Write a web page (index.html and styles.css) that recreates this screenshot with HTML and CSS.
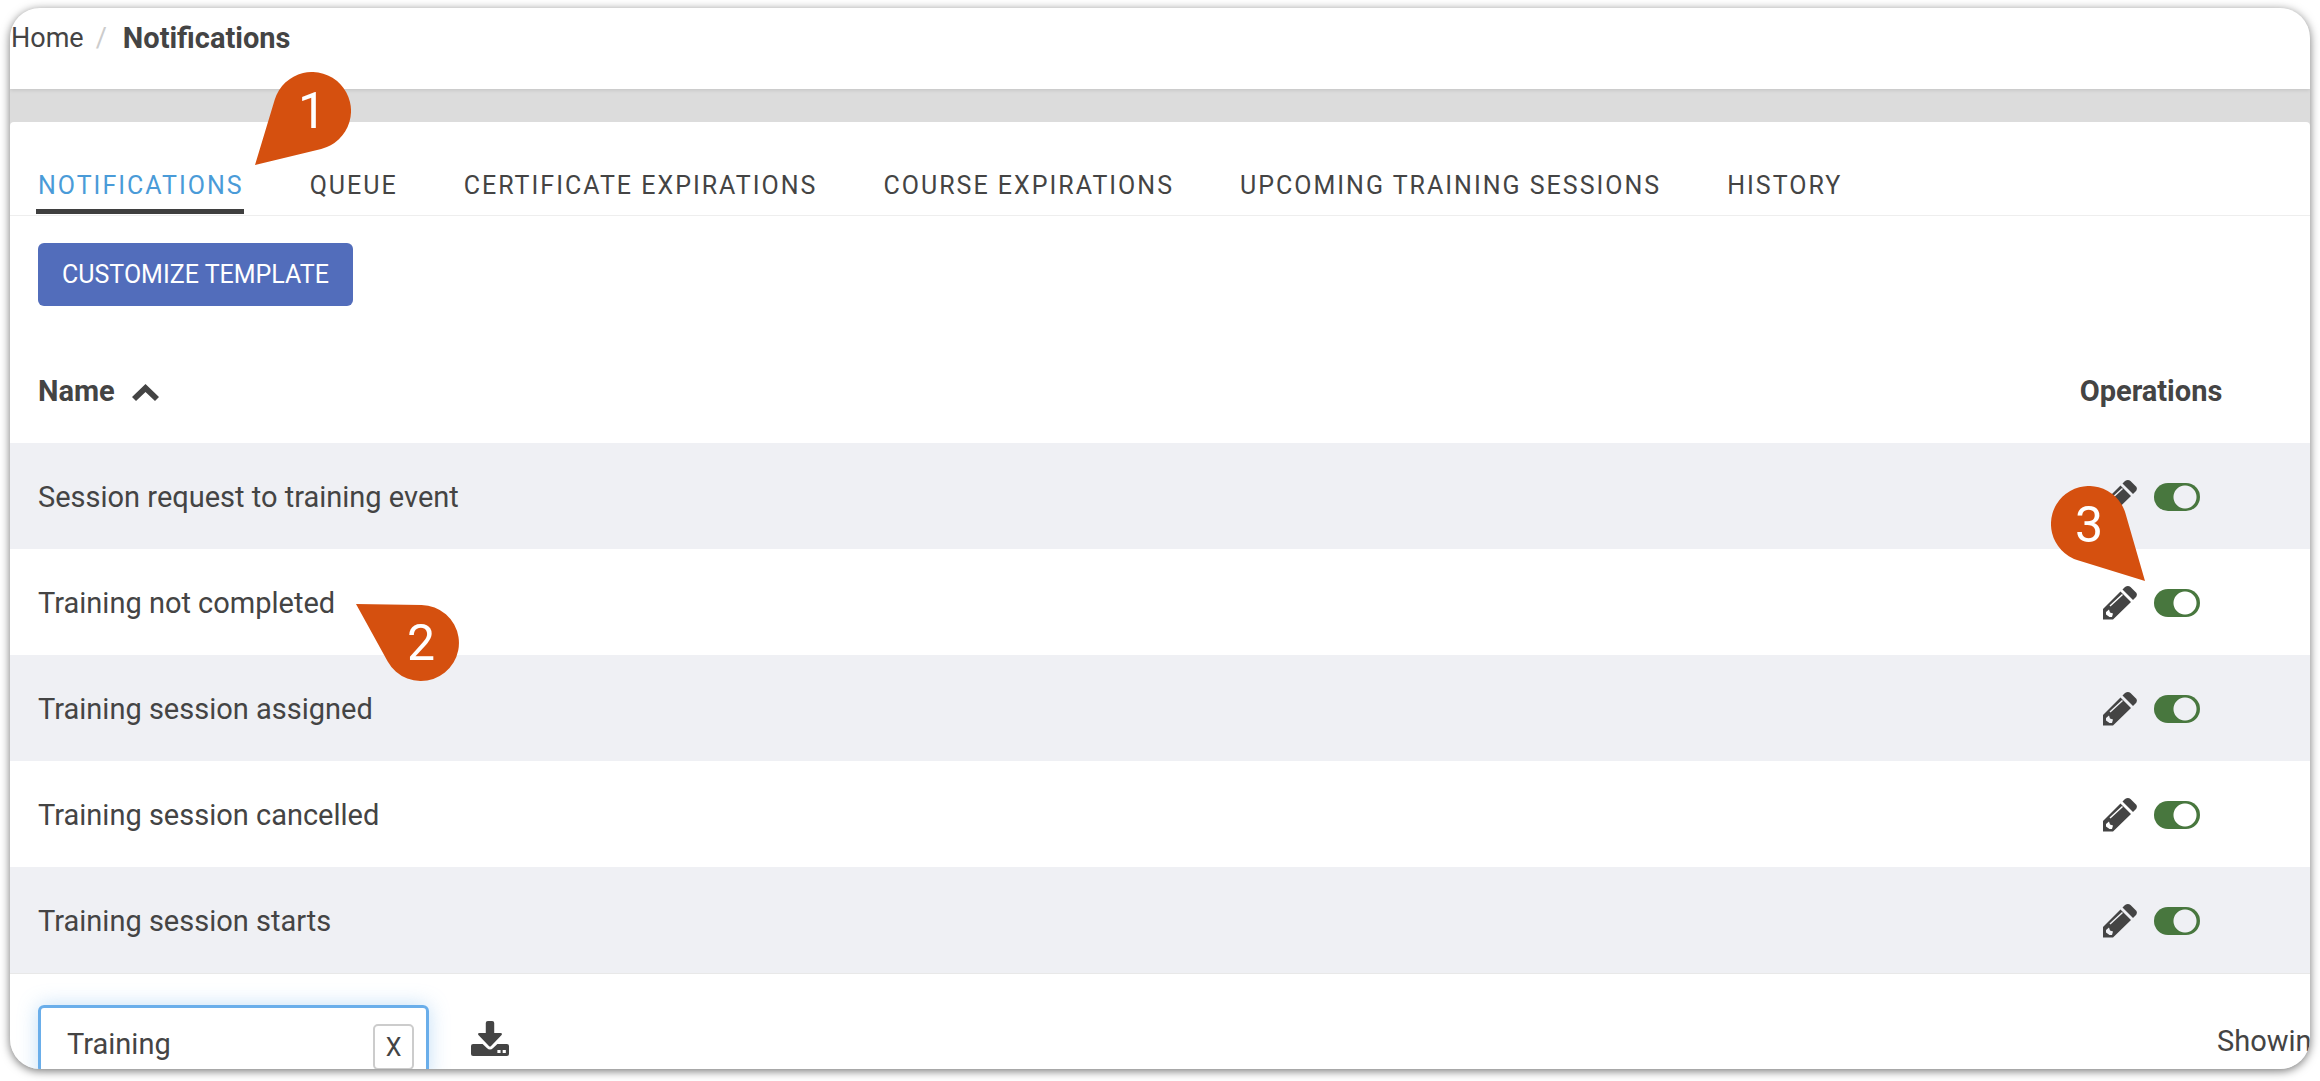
FILE: index.html
```html
<!DOCTYPE html>
<html lang="en">
<head>
  <meta charset="UTF-8" />
  <title>Notifications</title>
  <link rel="stylesheet" href="styles.css">
</head>
<body>
  <svg width="0" height="0" class="sprite" aria-hidden="true">
    <symbol id="pencil" viewBox="0 0 34 34">
      <path fill-rule="evenodd" d="M0 23L17.5 5.5L28 16L10 33.5H0ZM6.5 19.5L7.5 20.5L20 9L19 8ZM3 26L6 23.5L7 26.5L10 27.5L9 31H6.5L3 28.5Z" />
      <path d="M19.5 3.5L22 1Q25 -1 27.500 1L33 6.500Q35 9 32.500 11.500L30 14Z" />
    </symbol>
  </svg>

  <div class="panel">
    <nav class="breadcrumb" aria-label="Breadcrumb">
      <a href="#">Home</a>
      <span class="slash">/</span>
      <strong>Notifications</strong>
    </nav>

    <div class="content">
      <nav class="tabs">
        <div class="tab-wrap">
          <a class="tab active" href="#">NOTIFICATIONS</a>
          <svg class="marker marker-1" width="96" height="94" viewBox="0 0 96 94">
            <path d="M0 93L19.700 27.700A39 39 0 1 1 66.200 76.900Z" />
            <text x="57" y="56">1</text>
          </svg>
        </div>
        <a class="tab" href="#">QUEUE</a>
        <a class="tab" href="#">CERTIFICATE EXPIRATIONS</a>
        <a class="tab" href="#">COURSE EXPIRATIONS</a>
        <a class="tab" href="#">UPCOMING TRAINING SESSIONS</a>
        <a class="tab" href="#">HISTORY</a>
      </nav>

      <div class="actions">
        <button class="btn-primary" type="button">CUSTOMIZE TEMPLATE</button>
      </div>

      <table>
        <thead>
          <tr>
            <th class="name">
              <button class="sort" type="button">Name
                <svg width="27" height="17" viewBox="0 0 27 17"><path d="M13.500 0L27 13L23 17L13.500 8L4 17L0 13Z" /></svg>
              </button>
            </th>
            <th class="ops">Operations</th>
          </tr>
        </thead>
        <tbody>
          <tr>
            <td>Session request to training event</td>
            <td class="ops">
              <div class="ops-inner">
                <button class="icon-btn" type="button" aria-label="Edit"><svg width="34" height="34"><use href="#pencil" /></svg></button>
                <input class="toggle" type="checkbox" aria-label="Session request to training event enabled" checked>
              </div>
            </td>
          </tr>
          <tr>
            <td>
              Training not completed
              <svg class="marker marker-2" width="103" height="78" viewBox="0 0 103 78">
                <path d="M0 0L65.600 1A38 38 0 1 1 31.700 57.400Z" />
                <text x="65" y="56">2</text>
              </svg>
            </td>
            <td class="ops">
              <div class="ops-inner">
                <button class="icon-btn" type="button" aria-label="Edit"><svg width="34" height="34"><use href="#pencil" /></svg></button>
                <input class="toggle" type="checkbox" aria-label="Training not completed enabled" checked>
              </div>
              <svg class="marker marker-3" width="94" height="95" viewBox="0 0 94 95">
                <path d="M94 95L74.500 27.500A38 38 0 1 0 26.800 74.300Z" />
                <text x="38" y="56">3</text>
              </svg>
            </td>
          </tr>
          <tr>
            <td>Training session assigned</td>
            <td class="ops">
              <div class="ops-inner">
                <button class="icon-btn" type="button" aria-label="Edit"><svg width="34" height="34"><use href="#pencil" /></svg></button>
                <input class="toggle" type="checkbox" aria-label="Training session assigned enabled" checked>
              </div>
            </td>
          </tr>
          <tr>
            <td>Training session cancelled</td>
            <td class="ops">
              <div class="ops-inner">
                <button class="icon-btn" type="button" aria-label="Edit"><svg width="34" height="34"><use href="#pencil" /></svg></button>
                <input class="toggle" type="checkbox" aria-label="Training session cancelled enabled" checked>
              </div>
            </td>
          </tr>
          <tr>
            <td>Training session starts</td>
            <td class="ops">
              <div class="ops-inner">
                <button class="icon-btn" type="button" aria-label="Edit"><svg width="34" height="34"><use href="#pencil" /></svg></button>
                <input class="toggle" type="checkbox" aria-label="Training session starts enabled" checked>
              </div>
            </td>
          </tr>
        </tbody>
      </table>

      <div class="table-footer">
        <div class="search">
          <input type="text" value="Training" aria-label="Search notifications">
          <button type="button" aria-label="Clear search">X</button>
        </div>
        <button class="icon-btn download" type="button" aria-label="Download">
          <svg width="38" height="36" viewBox="0 0 36 36" preserveAspectRatio="none">
            <path d="M14 2Q14 0 16 0H20Q22 0 22 2V12H28Q30 12 29 14L19 25Q18 26 17 25L7 14Q6 12 8 12H14Z" />
            <path fill-rule="evenodd" d="M2 23H11L15 27Q18 30 21 27L25 23H34Q36 23 36 25V33Q36 35 34 35H2Q0 35 0 33V25Q0 23 2 23ZM25 29V32H28V29ZM30 29V32H33V29Z" />
          </svg>
        </button>
        <span class="count">Showing</span>
      </div>
    </div>
  </div>
</body>
</html>
```
FILE: styles.css
```css
* {
  box-sizing: border-box;
}
body {
  font-family: Roboto, Arial, sans-serif;
  font-size: 29px;
  color: #444;
  background: white;
  height: 100vh;
  margin: 0;
  padding: 8px 10px 12px;
}
.sprite {
  position: absolute;
}
svg {
  display: block;
  fill: #444;
}
a {
  color: inherit;
  text-decoration: none;
}
button, input {
  font: inherit;
  color: inherit;
  margin: 0;
}
button {
  cursor: pointer;
}
.panel {
  height: 100%;
  overflow: hidden;
  background: #dcdcdc;
  border-radius: 30px;
  box-shadow: 0 2px 10px rgba(0,0,0,0.55);
}
.breadcrumb {
  display: flex;
  gap: 12px;
  height: 81px;
  padding: 12px 1px;
  line-height: 36px;
  background: white;
  box-shadow: 0 1px 4px rgba(0,0,0,0.12);
}
.breadcrumb a {
  font-size: 27px;
}
.breadcrumb .slash {
  color: #ccc;
  font-size: 27px;
}
.breadcrumb strong {
  margin-left: 4px;
}
.content {
  margin-top: 33px;
  background: white;
  border-radius: 4px 4px 0 0;
}

/* tabs */
.tabs {
  display: flex;
  gap: 64px;
  height: 94px;
  padding: 0 26px;
  border-bottom: 1px solid #eee;
}
.tab-wrap {
  position: relative;
}
.tab {
  display: block;
  height: 92px;
  padding: 48px 0 0 2px;
  font-size: 25px;
  line-height: 32px;
  letter-spacing: 2px;
  white-space: nowrap;
}
.tab.active {
  color: #4a9bd8;
  border-bottom: 5px solid #3f3f3f;
}

/* numbered callouts */
.marker {
  position: absolute;
  z-index: 2;
  fill: #d5500f;
}
.marker text {
  fill: white;
  font-size: 50px;
  text-anchor: middle;
}
.marker-1 {
  left: 219px;
  top: -50px;
}
.marker-2 {
  left: 346px;
  top: 55px;
}
.marker-3 {
  right: 165px;
  top: -63px;
}

.actions {
  padding: 27px 28px 36px;
}
.btn-primary {
  display: block;
  height: 63px;
  padding: 0 24px;
  font-size: 25px;
  color: white;
  background: #526dbb;
  border: none;
  border-radius: 6px;
}

/* table */
table {
  width: 100%;
  border-collapse: collapse;
}
th, td {
  position: relative;
  height: 106px;
  padding: 2px 28px 0;
  text-align: left;
}
th {
  height: 101px;
  padding: 0 28px 4px;
}
tbody tr {
  --row-bg: white;
  background: var(--row-bg);
}
tbody tr:nth-child(odd) {
  --row-bg: #eff0f4;
}
.sort {
  display: flex;
  align-items: center;
  gap: 17px;
  padding: 0;
  border: none;
  background: none;
  font-weight: bold;
}
.sort svg {
  margin-top: 4px;
}
th.ops, td.ops {
  width: 318px;
  text-align: center;
}
.ops-inner {
  display: flex;
  justify-content: center;
  align-items: center;
  gap: 17px;
}
.icon-btn {
  padding: 0;
  border: none;
  background: none;
}
.toggle {
  appearance: none;
  width: 46px;
  height: 28px;
  border-radius: 14px;
  background: radial-gradient(circle at 31px 14px, var(--row-bg) 11px, #48773e 12px);
}

/* footer */
.table-footer {
  display: flex;
  align-items: flex-start;
  padding: 31px 0 40px 28px;
  border-top: 1px solid #e8e8e8;
}
.search {
  display: flex;
  flex-shrink: 0;
  width: 391px;
  height: 76px;
  padding: 16px 12px 0 26px;
  border: 3px solid #6aaeea;
  border-radius: 6px;
  box-shadow: 0 0 20px rgba(106,174,234,0.4);
}
.search input {
  flex: 1;
  min-width: 0;
  height: 40px;
  padding: 0;
  border: none;
  outline: none;
  background: none;
}
.search button {
  width: 41px;
  height: 46px;
  padding: 0;
  font-size: 25px;
  background: white;
  border: 2px solid #ccc;
  border-radius: 5px;
}
.download {
  margin: 16px 0 0 42px;
}
.count {
  width: 93px;
  margin-left: auto;
  margin-top: 18px;
  line-height: 36px;
  white-space: nowrap;
}
```
